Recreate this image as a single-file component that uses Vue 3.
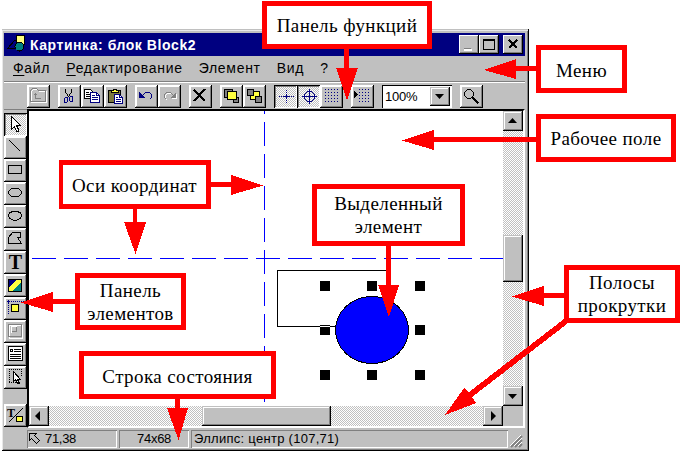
<script setup>
const K = '#000', W = '#fff', G = '#808080', Y = '#ffff40', N = '#000080'
const f = (d, fill) => ({ d, fill, stroke: 'none' })
const s = (d, stroke = K, fill = 'none', w = 1) => ({ d, fill, stroke, w })

const dots = (x0, y0, cols, rows, step) => {
  let d = ''
  for (let r = 0; r < rows; r++) for (let c = 0; c < cols; c++) d += `M${x0 + c * step} ${y0 + r * step}h1v1h-1z`
  return d
}
const pointer = 'M7.500 3.500v13l3-3 2 5h2v-2l-2-4h4z'
const selectDots = dots(5, 3, 7, 1, 2) + dots(5, 16, 5, 1, 2) + dots(5, 5, 1, 6, 2) + dots(17, 5, 1, 3, 2)

const icons = {
  folder: [s('M4.500 17.500v-11l2-2h4l2 2h7v11z', W), s('M3.500 16.500v-11l2-2h4l2 2h7v11z', G), s('M8.500 13.500v-5M6.500 10.500l2-2 2 2M8.500 13.500h5', G)],
  cut: [s('M7.500 4v3l4 6M13.500 4v3l-4 6'), s('M7.500 12.500h2v4l-1 1h-2v-4zM12.500 11.500h2v5h-2l-1-1v-3z', N)],
  copy: [s('M3.500 4.500h6l2 2v7h-8z', K, W), s('M5 7.500h3M5 9.500h4M5 11.500h4', K), s('M9.500 7.500h6l3 3v7h-9z', N, W), s('M15.500 7.500v3h3M11 10.500h3M11 12.500h6M11 14.500h6', N)],
  paste: [s('M4.500 5.500h12v12h-12z', K, '#7c7840'), s('M7.500 7.500v-2h2v-1h3v1h2v2z', K, Y), s('M10.500 9.500h5l3 3v6h-8z', N, W), s('M15.500 9.500v3h3M12 12.500h2M12 14.500h5M12 16.500h5', N)],
  undo: [f('M4 7v6h6z', N), s('M7.500 10.500l3-3h4l2 2v3l-2 2', N)],
  redo: [s('M16.500 11.500l-3-3h-4l-2 2v3l2 2', W), f('M19 8v6h-6z', W), f('M18 7v6h-6z', G), s('M15.500 10.500l-3-3h-4l-2 2v3l2 2', G)],
  remove: [s('M5 5l11 11M16 4l-11 12', K, 'none', 2)],
  front: [s('M4.500 4.500h8v8h-8zM13.500 12.500h5v5h-5z', K, G), s('M7.500 6.500h9v8h-9z', K, Y)],
  back: [s('M7.500 6.500h9v8h-9z', K, Y), s('M4.500 4.500h6v6h-6zM12.500 11.500h6v6h-6z', K, G)],
  axes: [f(dots(5, 11, 8, 1, 2) + dots(12, 5, 1, 7, 2) + 'M10 11h5v1h-5zM12 9h1v5h-1z', N)],
  target: [s('M5 11.500h15M12.500 4v15', N), s('M10.500 6.500h4l3 3v4l-3 3h-4l-3-3v-4z', N)],
  grid: [f(dots(5, 4, 5, 5, 3), N)],
  snap: [f('M3 6v7l4-3.500z', K), f(dots(8, 4, 4, 5, 3), N)],
  zoom: [s('M7.500 4.500h3l3 3v3l-3 3h-3l-3-3v-3z'), s('M12.500 12.500l6 6', K, 'none', 2.2)],
  pointer: [s(pointer, K, W)],
  line: [s('M5.500 4.500l11 11')],
  rect: [s('M4.500 6.500h13v8h-13z')],
  round: [s('M7.500 6.500h7l3 3v2l-3 3h-7l-3-3v-2z')],
  ellipse: [s('M9 6.500h4l3 1 1.500 2v2l-1.500 2-3 1.500h-4l-3-1.500-1.500-2v-2l1.500-2z')],
  polygon: [s('M4.500 15.500v-6l4-5h8v5h-3l4 6z')],
  text: [],
  picture: [s('M4.500 5.500h13v12h-13z', K, N), f('M17 7v10H8z', '#008080'), f('M12 6h5v2l-9 9H5v-3z', Y)],
  origin: [f(dots(5, 4, 8, 1, 2) + dots(4, 6, 1, 6, 2) + 'M3 4h3v1H3zM4 3h1v3H4z', N), s('M7.500 7.500h7v7h-7z', K, Y)],
  frame: [s('M5.500 18v-12.500h13v12.500z', W), s('M4.500 4.500h13v12h-13z', G), s('M7.500 12.500v-6h5', W), s('M12.500 6.500v5h-5', G)],
  list: [s('M4.500 3.500h14v14h-14z', K, W), s('M6.500 9V6.500h2V9M7 8.500h1M10 6.500h7M10 8.500h7M6 11.500h11M6 13.500h11M6 15.500h11')],
  select: [f(selectDots, K), s('M9.500 5.500v10l2-2 2 4h2l-2-4h3z', K, W)],
  style: [s('M4.500 18.500l14-14'), s('M12.500 12.500h6v5h-6z', K, Y)]
}

const groups = [['folder'], ['cut', 'copy', 'paste'], ['undo', 'redo'], ['remove'], ['front', 'back'], ['axes', 'target', 'grid'], ['snap']]
const tools = ['pointer', 'line', 'rect', 'round', 'ellipse', 'polygon', 'text', 'picture', 'origin', 'frame', 'list', 'select']
const pressed = ['axes', 'target', 'pointer']

const handles = [[320, 281], [367, 281], [415, 281], [320, 325], [415, 325], [320, 370], [367, 370], [415, 370]]

const callouts = [
  { id: 'functions', lines: ['Панель функций'] },
  { id: 'menu-note', lines: ['Меню'] },
  { id: 'field', lines: ['Рабочее поле'] },
  { id: 'coords', lines: ['Оси координат'] },
  { id: 'selected', lines: ['Выделенный', 'элемент'] },
  { id: 'elements', lines: ['Панель', 'элементов'] },
  { id: 'scrolls', lines: ['Полосы', 'прокрутки'] },
  { id: 'state', lines: ['Строка состояния'] }
]
const arrows = [
  'M344 48h5v20h9l-11 32-11-32h8z',
  'M537 66h-21v-7l-32 11 32 9v-8h21z',
  'M537 137h-103v-7l-32 10.500 32 9.500v-8h103z',
  'M210 182h21v-7l32 10.500-32 9.500v-8h-21z',
  'M133 208h4v14h9l-10.500 32-11.500-32h9z',
  'M76 299h-23v-7l-32 10.500 32 9.500v-8h23z',
  'M386 245h5v40h8l-10 32-11-32h8z',
  'M565 293h-21v-7l-32 10.500 32 9.500v-8h21z',
  'M564 319l-95 73-5-4-19 27 31-12-4-6 95-73z',
  'M175 398h5v10h8l-9.500 32-11.500-32h8z'
]
</script>

<template>
  <div class="page">
    <div class="window">
      <header class="title">
        <svg class="logo" width="20" height="20" shape-rendering="crispEdges">
          <path d="M1.500 13.500l7-8h2v8z" fill="#000080" stroke="#000" />
          <path d="M10.500 .500h8v9h-8z" fill="#ffff80" stroke="#000" />
          <circle cx="13.500" cy="11.500" r="4.500" fill="#008080" stroke="#000" />
        </svg>
        <span class="caption">Картинка: блок Block2</span>
        <div class="controls">
          <button class="ctl"><svg width="20" height="19" shape-rendering="crispEdges"><path d="M5 14h8v2H5z" fill="#fff" /><path d="M5 13h7v1H5z" fill="#808080" /></svg></button>
          <button class="ctl"><svg width="20" height="19" shape-rendering="crispEdges"><path d="M4.500 5h11v9.500h-11zM4 4.500h12" fill="none" stroke="#000" /></svg></button>
          <button class="ctl close"><svg width="20" height="19" shape-rendering="crispEdges"><path d="M6 5l8 8M14 5l-8 8" stroke="#000" stroke-width="2" /></svg></button>
        </div>
      </header>

      <nav class="menu">
        <span><u>Ф</u>айл</span><span><u>Р</u>едактирование</span><span>Элемент</span><span>Вид</span><span>?</span>
      </nav>

      <div class="toolbar">
        <div v-for="(g, i) in groups" :key="i" class="group">
          <button v-for="n in g" :key="n" class="btn" :class="{ down: pressed.includes(n) }">
            <svg width="23" height="23" shape-rendering="crispEdges">
              <path v-for="(p, j) in icons[n]" :key="j" :d="p.d" :fill="p.fill" :stroke="p.stroke" :stroke-width="p.w" />
            </svg>
          </button>
        </div>
        <div class="combo"><span>100%</span><button class="sb"><svg width="20" height="19"><path d="M5 7h9l-4.500 5z" /></svg></button></div>
        <button class="btn">
          <svg width="23" height="23" shape-rendering="crispEdges">
            <path v-for="(p, j) in icons.zoom" :key="j" :d="p.d" :fill="p.fill" :stroke="p.stroke" :stroke-width="p.w" />
          </svg>
        </button>
      </div>

      <main class="main">
        <aside class="toolbox">
          <button v-for="n in tools" :key="n" class="btn" :class="{ down: pressed.includes(n) }">
            <b v-if="n === 'text'" class="tee">T</b>
            <svg v-else width="23" height="23" shape-rendering="crispEdges">
              <path v-for="(p, j) in icons[n]" :key="j" :d="p.d" :fill="p.fill" :stroke="p.stroke" :stroke-width="p.w" />
            </svg>
          </button>
          <button class="btn last">
            <svg width="23" height="23" shape-rendering="crispEdges">
              <path v-for="(p, j) in icons.style" :key="j" :d="p.d" :fill="p.fill" :stroke="p.stroke" :stroke-width="p.w" />
              <text x="3" y="13" class="small-tee">T</text>
            </svg>
          </button>
        </aside>
        <div class="view">
          <svg class="canvas" width="474" height="295" viewBox="29 111 474 295" shape-rendering="crispEdges">
            <path d="M264.500 90v316M32 258.500h471" fill="none" stroke="#00f" stroke-dasharray="24 8" />
            <path d="M277.500 270.500h111v56h-111z" fill="none" stroke="#000" />
            <ellipse cx="372" cy="330" rx="36.500" ry="33.500" fill="#00f" stroke="#000" />
            <rect v-for="(h, i) in handles" :key="i" :x="h[0]" :y="h[1]" width="10" height="10" />
            <path d="M320 326.500h10" stroke="#fff" />
          </svg>
          <div class="vbar">
            <button class="sb"><svg width="20" height="20"><path d="M5 12h9l-4.500-5z" /></svg></button>
            <div class="track vtop"></div>
            <div class="sb vthumb"></div>
            <div class="track grow"></div>
            <button class="sb"><svg width="20" height="20"><path d="M5 8h9l-4.500 5z" /></svg></button>
          </div>
          <div class="hbar">
            <button class="sb"><svg width="20" height="20"><path d="M11 5v10l-5-5z" /></svg></button>
            <div class="track hleft"></div>
            <div class="sb hthumb"></div>
            <div class="track grow"></div>
            <button class="sb"><svg width="20" height="20"><path d="M8 5v10l5-5z" /></svg></button>
          </div>
          <div class="corner"></div>
        </div>
      </main>

      <footer class="status">
        <div class="pane p1">
          <svg width="14" height="14" shape-rendering="crispEdges"><path d="M1.500 1.500h7l-2 2 5 5-3 3-5-5-2 2z" fill="none" stroke="#000" /></svg>
          <span>71,38</span>
        </div>
        <div class="pane p2">74x68</div>
        <div class="pane p3">Эллипс: центр (107,71)</div>
        <svg class="grip" width="14" height="17"><path d="M1 13L12 2M5 13l7-7M9 13l3-3" stroke="#808080" stroke-width="2" /><path d="M0 12L11 1M4 12l8-8M8 12l4-4" stroke="#fff" /></svg>
      </footer>
    </div>

    <div v-for="c in callouts" :key="c.id" class="callout" :class="c.id">
      <span v-for="l in c.lines" :key="l">{{ l }}</span>
    </div>
    <svg class="arrows" width="680" height="451" shape-rendering="crispEdges">
      <path v-for="a in arrows" :key="a" :d="a" fill="#f00" />
    </svg>
  </div>
</template>

<style>
body { margin: 0; background: #fff; overflow: hidden; }
</style>

<style scoped>
.page { position: relative; width: 680px; height: 451px; overflow: hidden; padding: 29px 0 0 2px; font-family: "Liberation Sans", sans-serif; font-size: 13px; color: #000; }
.page *, .page { box-sizing: border-box; }
svg { display: block; }
button { margin: 0; padding: 0; border: 0; font: inherit; color: #000; }
.window { width: 527px; height: 422px; display: flex; flex-direction: column; padding: 4px 3px 0 2px; background: #c0c0c0; border-right: 1px solid #000; border-bottom: 1px solid #000; box-shadow: inset 0 1px #c0c0c0, inset 1px 2px #e8e8e8, inset -1px -1px #808080; }
.title { height: 23px; display: flex; align-items: center; background: #000080; color: #fff; padding: 0 2px; }
.caption { margin-left: 4px; font-size: 14px; font-weight: bold; letter-spacing: 0.55px; line-height: 22px; flex: 1; white-space: nowrap; }
.controls { display: flex; }
.ctl { width: 20px; height: 19px; background: #c0c0c0; box-shadow: inset -1px -1px #000, inset 1px 1px #fff, inset -2px -2px #808080; }
.close { margin-left: 4px; }
.menu { height: 27px; display: flex; padding: 0 0 0 9px; font-size: 14px; line-height: 24px; letter-spacing: 0.7px; border-bottom: 1px solid #fff; box-shadow: inset 0 -1px #808080; gap: 16px; white-space: nowrap; }
u { text-underline-offset: 2px; text-decoration-thickness: 1px; }
.toolbar { height: 26px; display: flex; gap: 8px; padding: 2px 0 0 23px; }
.group { display: flex; }
.btn { width: 23px; height: 23px; flex: none; background: #c0c0c0; box-shadow: inset -1px -1px #000, inset 1px 1px #fff, inset -2px -2px #808080, inset 2px 2px #fff; }
.down, .track { background: repeating-conic-gradient(#c0c0c0 0 25%, #fff 0 50%) 0 0 / 2px 2px; }
.down { box-shadow: inset 1px 1px #000, inset -1px -1px #fff, inset 2px 2px #808080; }
.combo { width: 70px; height: 23px; display: flex; justify-content: space-between; background: #fff; padding: 2px; box-shadow: inset 1px 1px #000, inset -1px -1px #fff; line-height: 19px; }
.combo span { padding-left: 1px; letter-spacing: -0.2px; }
.sb { width: 20px; height: 20px; flex: none; background: #c0c0c0; box-shadow: inset -1px -1px #000, inset 1px 1px #c0c0c0, inset -2px -2px #808080, inset 2px 2px #fff; }
.combo .sb { height: 19px; }
.main { height: 319px; display: flex; }
.toolbox { width: 23px; display: flex; flex-direction: column; padding-top: 3px; border-top: 1px solid #808080; }
.last { margin-top: 15px; }
.tee { display: block; font: bold 20px/23px "Liberation Serif", serif; text-align: center; }
.small-tee { font: bold 12px "Liberation Serif", serif; }
.view { width: 498px; height: 319px; display: grid; grid-template-columns: 474px 20px; grid-template-rows: 295px 20px; border-left: 2px solid #000; border-top: 2px solid #000; border-right: 2px solid #fff; border-bottom: 2px solid #fff; }
.canvas { background: #fff; }
.vbar { display: flex; flex-direction: column; }
.hbar { display: flex; }
.vtop { height: 104px; }
.vthumb { height: 47px; }
.hleft { width: 153px; }
.hthumb { width: 129px; }
.grow { flex: 1; }
.corner { background: #c0c0c0; }
.status { height: 22px; display: flex; gap: 2px; padding: 2px 0 3px 23px; line-height: 17px; }
.pane { height: 18px; box-shadow: inset 1px 1px #808080, inset -1px -1px #fff; white-space: nowrap; }
.p1 { width: 90px; display: flex; align-items: flex-start; gap: 3px; padding-left: 1px; letter-spacing: -0.3px; }
.p1 svg { margin-top: 2px; }
.p2 { width: 70px; padding-right: 18px; text-align: right; letter-spacing: -0.3px; }
.p3 { width: 317px; padding-left: 3px; letter-spacing: 0.28px; }
.grip { margin-top: 4px; }
.callout { position: absolute; display: flex; flex-direction: column; justify-content: center; align-items: center; background: #fff; border: 5px solid #f00; font: 19px/23px "Liberation Serif", serif; letter-spacing: 0.4px; white-space: nowrap; }
.functions { left: 262px; top: 1px; width: 170px; height: 48px; }
.menu-note { left: 536px; top: 45px; width: 91px; height: 48px; padding-top: 2px; }
.field { left: 536px; top: 114px; width: 140px; height: 48px; padding-top: 1px; }
.coords { left: 59px; top: 160px; width: 152px; height: 49px; border-left-width: 4px; padding-top: 1px; }
.selected { left: 312px; top: 184px; width: 153px; height: 62px; }
.elements { left: 75px; top: 273px; width: 111px; height: 57px; padding-top: 1px; }
.scrolls { left: 564px; top: 265px; width: 116px; height: 58px; }
.state { left: 79px; top: 351px; width: 197px; height: 48px; padding-top: 2px; }
.arrows { position: absolute; left: 0; top: 0; pointer-events: none; }
</style>
